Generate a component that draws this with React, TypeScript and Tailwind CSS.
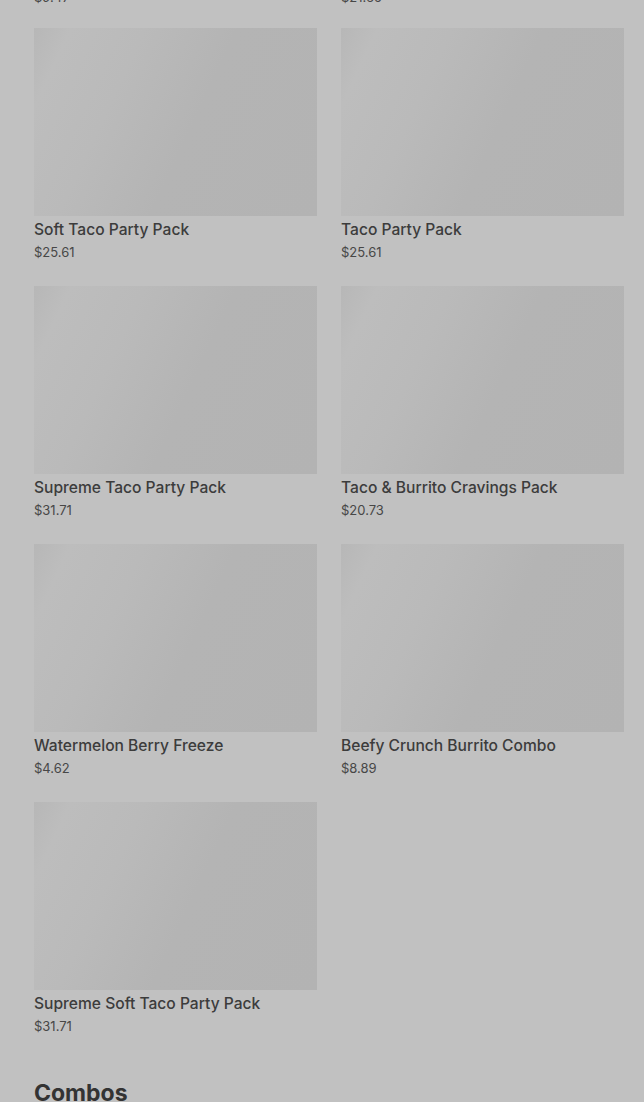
import React from "react";

const prev: { name: string; price: string }[] = [
  { name: "Chicken Quesadilla Combo", price: "$9.47" },
  { name: "Nachos Party Pack", price: "$21.65" },
];

const items: { name: string; price: string }[] = [
  { name: "Soft Taco Party Pack", price: "$25.61" },
  { name: "Taco Party Pack", price: "$25.61" },
  { name: "Supreme Taco Party Pack", price: "$31.71" },
  { name: "Taco & Burrito Cravings Pack", price: "$20.73" },
  { name: "Watermelon Berry Freeze", price: "$4.62" },
  { name: "Beefy Crunch Burrito Combo", price: "$8.89" },
  { name: "Supreme Soft Taco Party Pack", price: "$31.71" },
];

function Card({ name, price }: { name: string; price: string }) {
  return (
    <div className="flex flex-col">
      <div className="h-[188px] w-full bg-[linear-gradient(115deg,#b7b7b7_0%,#bdbdbd_10%,#bababa_30%,#b4b4b4_55%,#b3b3b3_100%)]" />
      <div className="mt-[2px] text-[15.6px] leading-[24px] font-medium text-[#3c3c3c]">{name}</div>
      <div className="mt-[1px] text-[13px] leading-[18px] text-[#474747]">{price}</div>
    </div>
  );
}

export default function App() {
  return (
    <div
      className="min-h-[1102px] w-full overflow-hidden bg-[#c1c1c1]"
      style={{ fontFamily: "Inter, 'Noto Sans', sans-serif" }}
    >
      <div className="pl-[34px] pr-[20px]">
        <div className="-mt-[227px] grid grid-cols-2 gap-x-6">
          {prev.map((it, i) => (
            <Card key={i} name={it.name} price={it.price} />
          ))}
        </div>
        <div className="mt-[22px] grid grid-cols-2 gap-x-6 gap-y-[25px]">
          {items.map((it, i) => (
            <Card key={i} name={it.name} price={it.price} />
          ))}
        </div>
        <h2 className="mt-[44px] text-[23px] leading-[28px] font-bold text-[#333333]">Combos</h2>
      </div>
    </div>
  );
}
